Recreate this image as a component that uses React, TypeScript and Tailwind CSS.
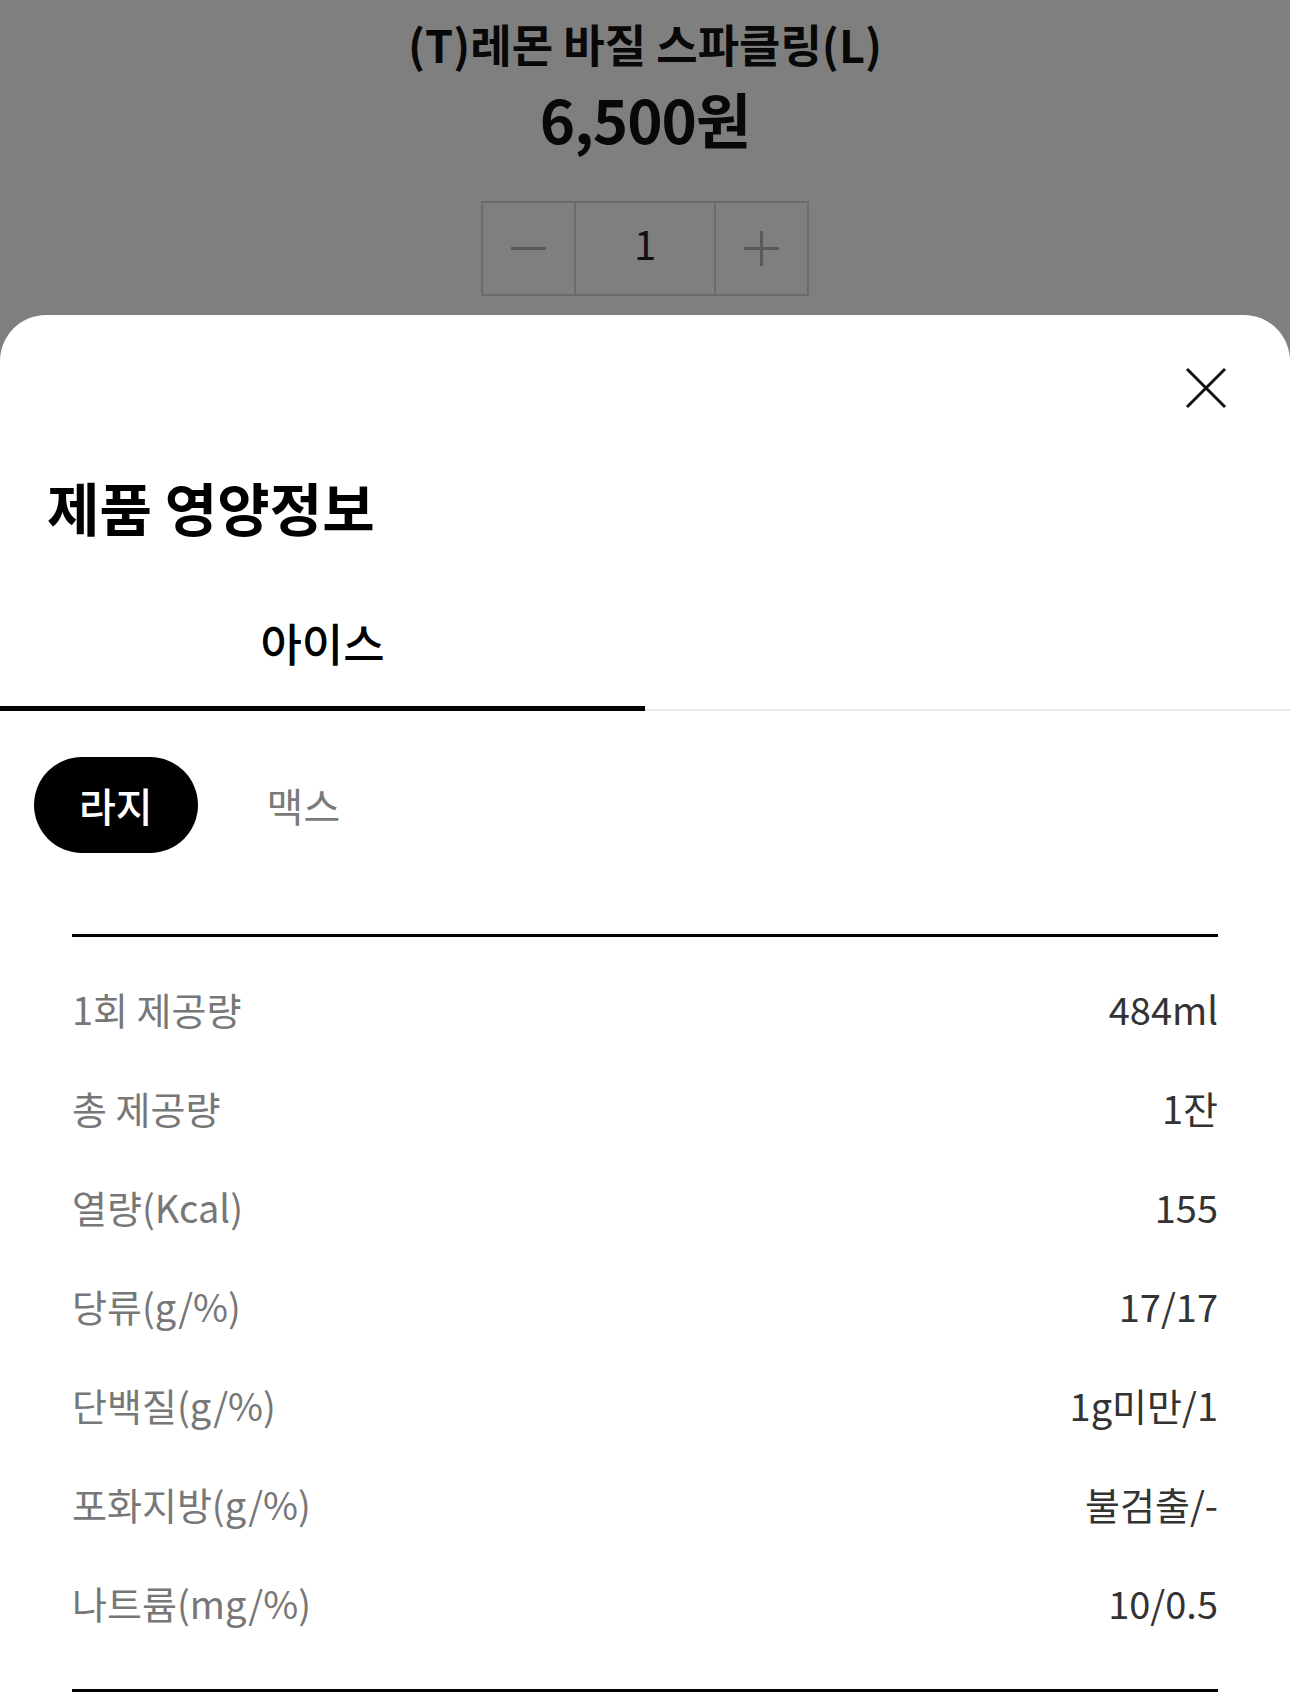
const ROWS: [string, string][] = [
  ['1회 제공량', '484ml'],
  ['총 제공량', '1잔'],
  ['열량(Kcal)', '155'],
  ['당류(g/%)', '17/17'],
  ['단백질(g/%)', '1g미만/1'],
  ['포화지방(g/%)', '불검출/-'],
  ['나트륨(mg/%)', '10/0.5'],
];

const SIZES = ['라지', '맥스'];

export default function App() {
  return (
    <div className="relative h-[1699px] w-full overflow-hidden bg-white font-['Noto_Sans_CJK_KR','Noto_Sans',sans-serif]">
      {/* product page behind the sheet */}
      <div className="flex flex-col items-center pt-[17px]">
        <div className="text-[45px] leading-[54px] font-bold text-[#111]">(T)레몬 바질 스파클링(L)</div>
        <div className="mt-[12px] text-[60px] leading-[70px] font-bold text-[#111] tracking-[-1px]">6,500원</div>
        <div className="mt-[48px] flex h-[95px] border-2 border-[#d6d6d6]">
          <button className="w-[91px] flex items-center justify-center">
            <span className="block w-[35px] h-[3px] bg-[#b5b5b5]" />
          </button>
          <div className="w-[142px] border-x-2 border-[#d6d6d6] flex items-center justify-center pb-[12px] text-[40px] text-[#222]">1</div>
          <button className="w-[91px] flex items-center justify-center">
            <svg width="35" height="35" viewBox="0 0 35 35">
              <path d="M0 17.5H35M17.5 0V35" stroke="#b5b5b5" strokeWidth="3" />
            </svg>
          </button>
        </div>
      </div>

      {/* dim */}
      <div className="absolute inset-0 bg-black/50" />

      {/* bottom sheet */}
      <div className="absolute left-0 right-0 top-[315px] bottom-0 bg-white rounded-t-[46px]">
        <div className="flex justify-end pt-[52px] pr-[63px]">
          <button className="w-[42px] h-[42px]">
            <svg width="42" height="42" viewBox="0 0 42 42">
              <path d="M2 2L40 40M40 2L2 40" stroke="#111" strokeWidth="3" />
            </svg>
          </button>
        </div>

        <div className="mt-[66px] pl-[47px] text-[57px] leading-[62px] font-bold text-black">제품 영양정보</div>

        <div className="mt-[51px] grid grid-cols-2">
          <button className="pt-[29px] pb-[37px] border-b-[5px] border-black text-[45px] leading-[52px] font-medium text-black">아이스</button>
          <div className="flex flex-col justify-end">
            <div className="h-[2px] bg-[#e8e8e8]" />
          </div>
        </div>

        <div className="mt-[46px] pl-[34px] flex gap-[24px]">
          {SIZES.map((s, i) => (
            <button
              key={s}
              className={`h-[96px] px-[45px] rounded-full text-[40px] ${i === 0 ? 'bg-black text-white font-medium' : 'bg-white text-[#7a7a7a]'}`}
            >
              {s}
            </button>
          ))}
        </div>

        <div className="mt-[81px] mx-[72px] border-t-[3px] border-b-[3px] border-black pt-[22px] pb-[37px]">
          {ROWS.map(([k, v]) => (
            <div key={k} className="h-[99px] flex items-center justify-between text-[38px]">
              <span className="text-[#777]">{k}</span>
              <span className="text-[#333]">{v}</span>
            </div>
          ))}
        </div>
      </div>
    </div>
  );
}
